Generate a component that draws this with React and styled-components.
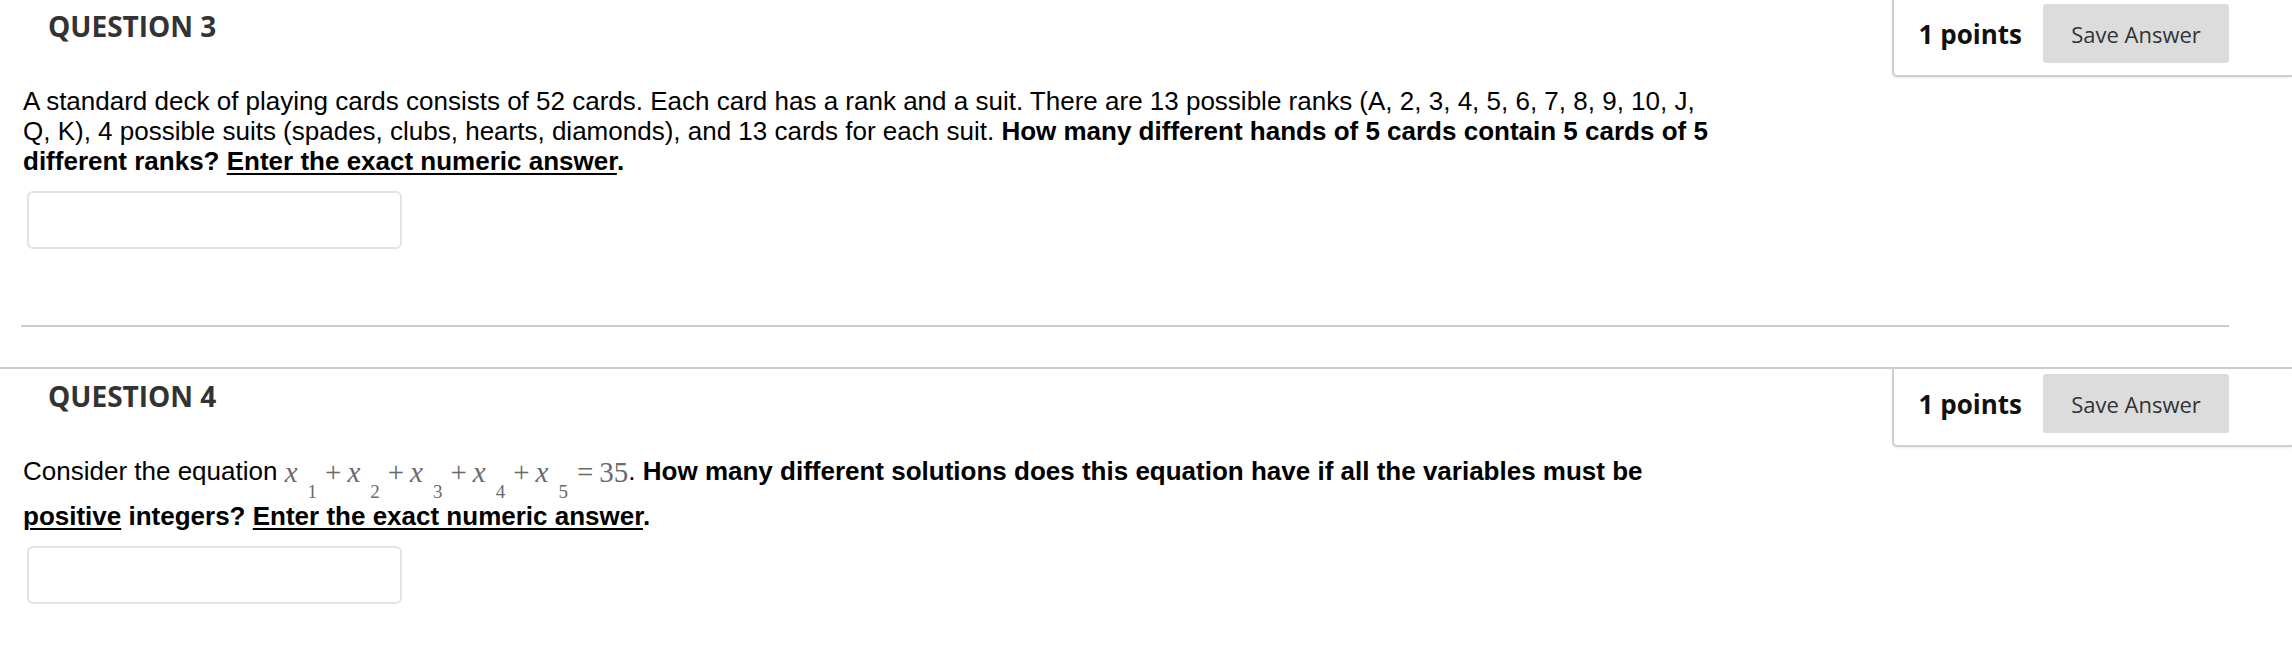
import React from "react";
import styled, { createGlobalStyle } from "styled-components";

const GlobalStyle = createGlobalStyle`
  html, body { margin: 0; padding: 0; background: #fff; }
  body { font-family: "Liberation Sans", Arial, sans-serif; color: #000; }
`;

const QuestionList = styled.ul`
  list-style: none;
  margin: -3px 0 0;
  padding: 0;
  overflow: hidden;
`;

const Question = styled.li`
  border-top: 2px solid #cccccc;
  padding-bottom: 40px;
`;

const Header = styled.div`
  display: flex;
  align-items: flex-start;
  justify-content: space-between;
`;

const Title = styled.h3`
  margin: 10px 0 0 48px;
  font-family: "Open Sans", sans-serif;
  font-weight: 700;
  font-size: 28px;
  line-height: 34px;
  color: #333;
`;

const PointsBox = styled.div`
  display: flex;
  align-items: center;
  gap: 21px;
  padding: 5px 63px 12px 25px;
  border-left: 2px solid #cfcfcf;
  border-bottom: 2px solid #cfcfcf;
  border-bottom-left-radius: 5px;
  box-shadow: 0 1px 2px rgba(0, 0, 0, 0.08);
  background: #fff;
`;

const Points = styled.span`
  font-family: "Open Sans", sans-serif;
  font-weight: 700;
  font-size: 26px;
  color: #111;
`;

const SaveButton = styled.button`
  width: 186px;
  height: 59px;
  border: none;
  border-radius: 3px;
  background: #dcdcdc;
  font-family: "Open Sans", sans-serif;
  font-size: 22px;
  color: #333;
  padding: 0;
`;

const Prompt = styled.div`
  margin: 9px 0 0 23px;
  width: 1700px;
  font-size: 26px;
  line-height: 30px;
`;

const Strong = styled.strong`
  font-weight: 700;
  text-decoration: ${(p) => (p.$u ? "underline" : "none")};
  text-decoration-thickness: 2px;
  text-underline-offset: 3px;
`;

const AnswerInput = styled.input`
  display: block;
  box-sizing: border-box;
  margin: 15px 0 0 27px;
  width: 375px;
  height: 58px;
  border: 2px solid #e3e3e3;
  border-radius: 6px;
  background: #fff;
  outline: none;
`;

const Divider = styled.div`
  margin: 76px 63px 0 21px;
  height: 2px;
  background: #cccccc;
`;

const Equation = styled.span`
  display: inline-block;
  vertical-align: -2px;
  font-family: "Liberation Serif", "Times New Roman", serif;
  font-size: 29px;
  line-height: 1;
  color: #6a6a6a;
`;

const Var = styled.span`
  font-style: italic;
`;

const Sub = styled.span`
  display: inline-block;
  font-size: 19px;
  line-height: 1;
  vertical-align: -16px;
  margin-left: 10px;
`;

const Op = styled.span`
  margin: 0 ${(p) => p.$after ?? 6}px 0 ${(p) => p.$before ?? 8}px;
`;

function Term({ n, last }) {
  return (
    <>
      <Var>x</Var>
      <Sub>{n}</Sub>
      {!last && <Op>+</Op>}
    </>
  );
}

function QuestionHeader({ title }) {
  return (
    <Header>
      <Title>{title}</Title>
      <PointsBox>
        <Points>1 points</Points>
        <SaveButton type="button">Save Answer</SaveButton>
      </PointsBox>
    </Header>
  );
}

export default function App() {
  return (
    <>
      <GlobalStyle />
      <QuestionList>
        <Question>
          <QuestionHeader title="QUESTION 3" />
          <Prompt>
            A standard deck of playing cards consists of 52 cards. Each card has a rank and a suit. There are 13
            possible ranks (A, 2, 3, 4, 5, 6, 7, 8, 9, 10, J, Q, K), 4 possible suits (spades, clubs, hearts,
            diamonds), and 13 cards for each suit.{" "}
            <Strong>How many different hands of 5 cards contain 5 cards of 5 different ranks? </Strong>
            <Strong $u>Enter the exact numeric answer</Strong>
            <Strong>.</Strong>
          </Prompt>
          <AnswerInput type="text" aria-label="Answer to question 3" />
          <Divider />
        </Question>
        <Question>
          <QuestionHeader title="QUESTION 4" />
          <Prompt>
            Consider the equation{" "}
            <Equation>
              <Term n="1" />
              <Term n="2" />
              <Term n="3" />
              <Term n="4" />
              <Term n="5" last />
              <Op $before={9} $after={6}>=</Op>35
            </Equation>
            .{" "}
            <Strong>How many different solutions does this equation have if all the variables must be </Strong>
            <Strong $u>positive</Strong>
            <Strong> integers? </Strong>
            <Strong $u>Enter the exact numeric answer</Strong>
            <Strong>.</Strong>
          </Prompt>
          <AnswerInput type="text" aria-label="Answer to question 4" />
          <Divider />
        </Question>
      </QuestionList>
    </>
  );
}
